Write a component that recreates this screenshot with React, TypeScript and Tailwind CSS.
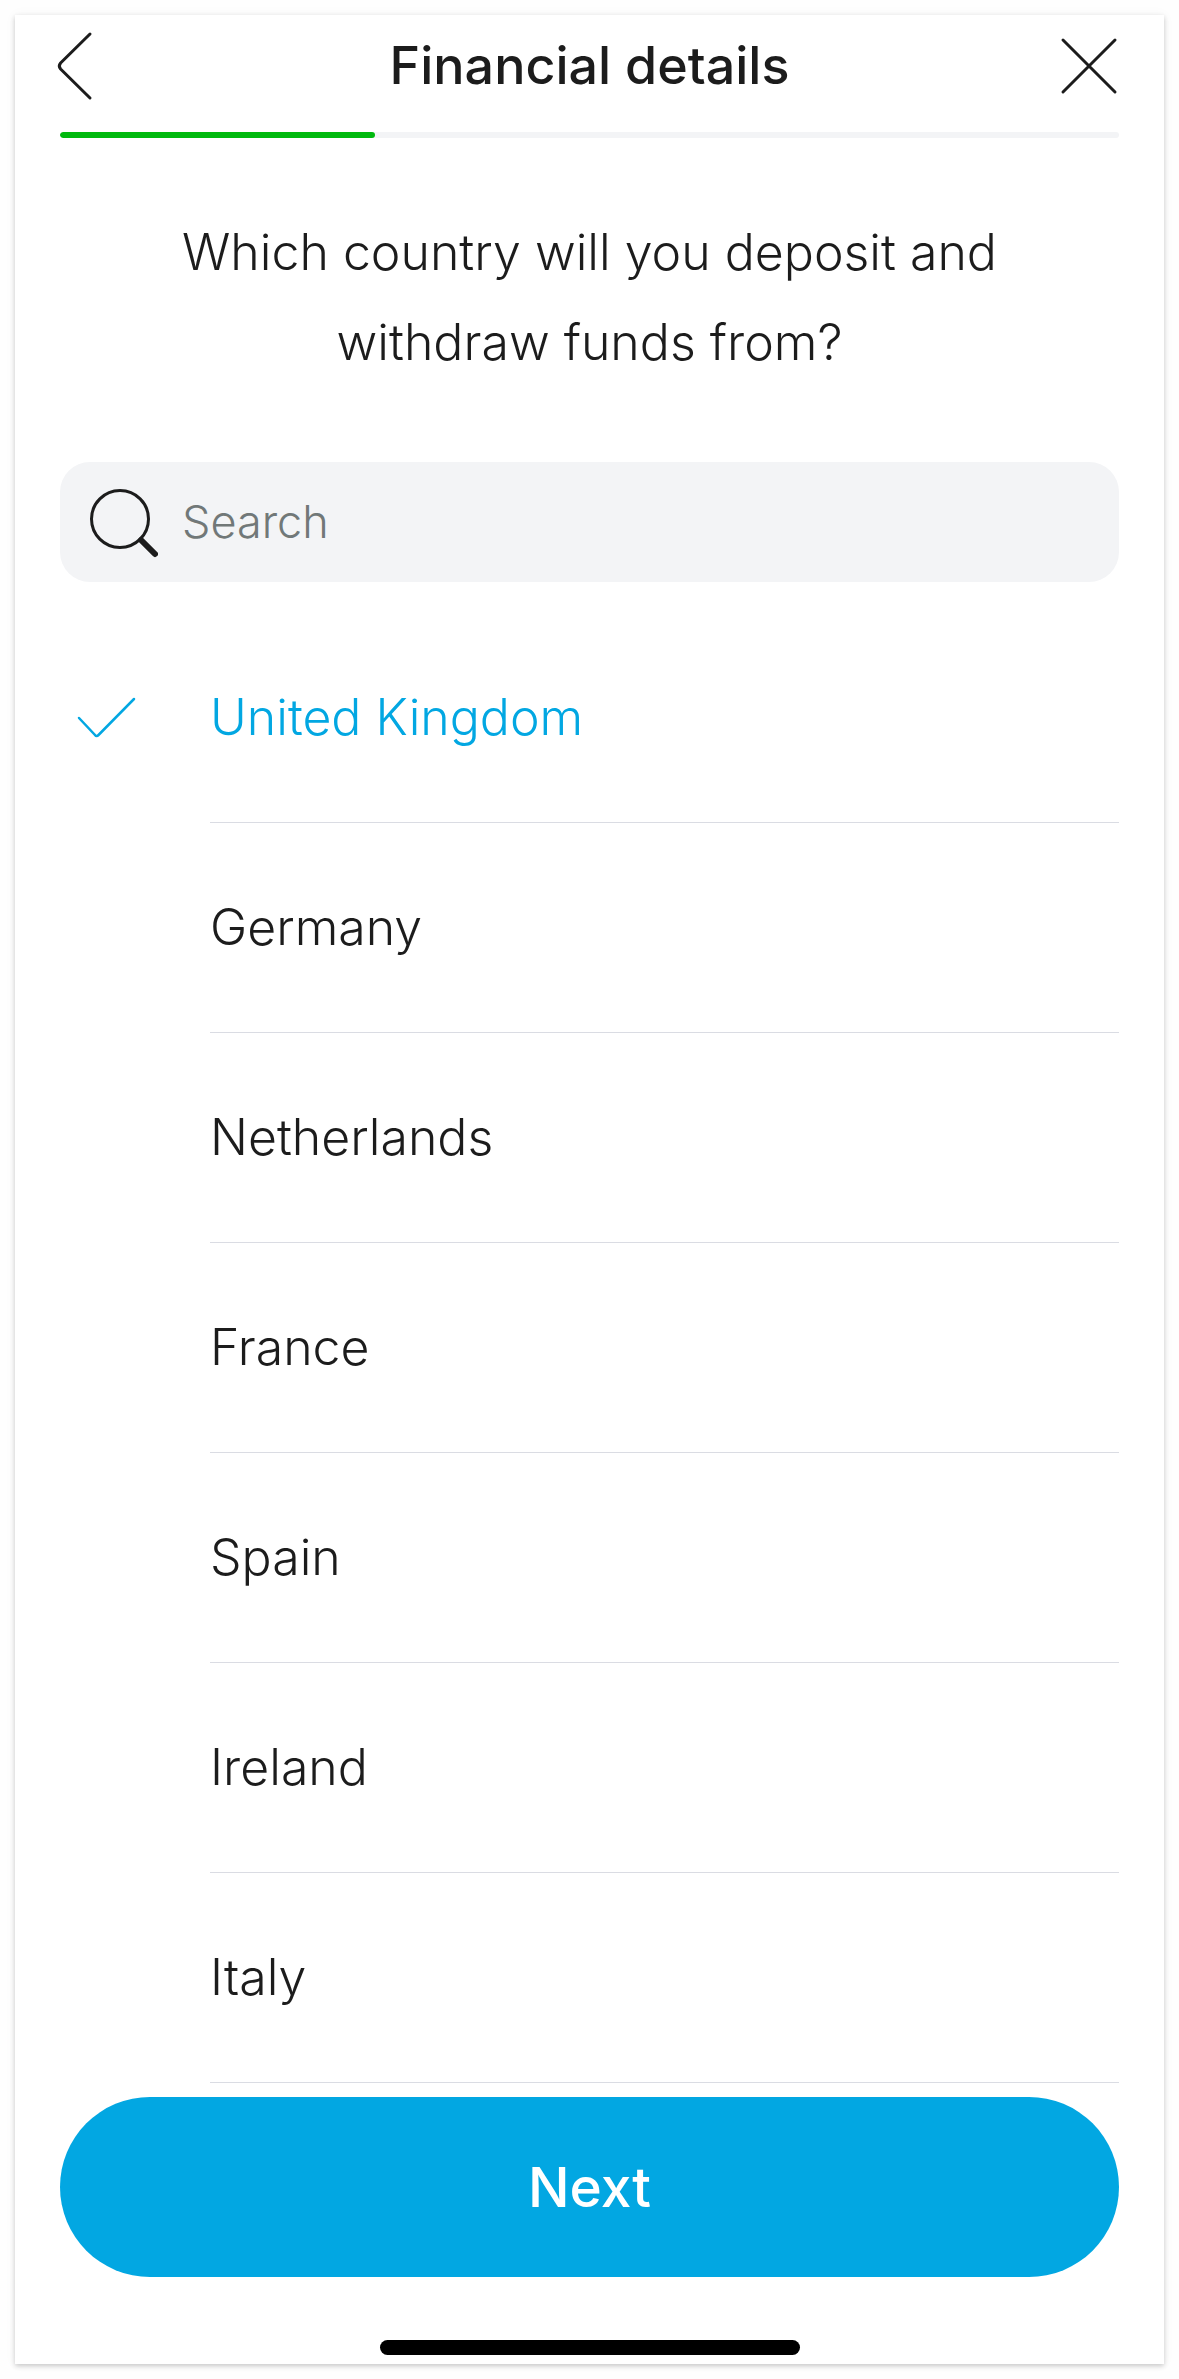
import { useState } from "react";

const COUNTRIES = ["United Kingdom", "Germany", "Netherlands", "France", "Spain", "Ireland", "Italy"];

function BackIcon() {
  return (
    <svg width="72" height="72" viewBox="0 0 72 72" fill="none" stroke="currentColor" strokeWidth="3" strokeLinecap="round" aria-hidden="true">
      <path d="M35 4 L5.6 33 Q3 36 5.6 39 L35 68" />
    </svg>
  );
}

function CloseIcon() {
  return (
    <svg width="72" height="72" viewBox="0 0 72 72" fill="none" stroke="currentColor" strokeWidth="3" strokeLinecap="round" aria-hidden="true">
      <path d="M11 10 L63 62 M63 10 L11 62" />
    </svg>
  );
}

function SearchIcon() {
  return (
    <svg className="shrink-0" width="72" height="72" viewBox="0 0 72 72" fill="none" stroke="currentColor" strokeLinecap="round" aria-hidden="true">
      <circle cx="34" cy="33" r="28.5" strokeWidth="3" />
      <path d="M55 54 L69 68" strokeWidth="6" />
    </svg>
  );
}

function CheckIcon() {
  return (
    <svg width="60" height="60" viewBox="0 0 60 60" fill="none" stroke="currentColor" strokeWidth="2.5" strokeLinecap="round" aria-hidden="true">
      <path d="M3 31 L19 48 Q20.5 50 22.5 48 L58 12" />
    </svg>
  );
}

export default function App() {
  const [query, setQuery] = useState("");
  const [country, setCountry] = useState("United Kingdom");

  const shown = COUNTRIES.filter((c) => c.toLowerCase().includes(query.toLowerCase()));

  return (
    <div className="min-h-screen bg-[#fefefe] p-[15px] font-['Inter',sans-serif] text-[#1c1c1c]">
      <main className="bg-white pb-[9px] shadow-[0_2px_5px_rgba(0,0,0,0.2),0_0_12px_rgba(0,0,0,0.04)]">
        <header className="flex h-[102px] items-center justify-between px-10">
          <button type="button" aria-label="Back"><BackIcon /></button>
          <h1 className="text-[52px] leading-[60px] font-medium">Financial details</h1>
          <button type="button" aria-label="Close"><CloseIcon /></button>
        </header>

        <div className="px-[45px]">
          <div className="mt-[15px] h-[6px] overflow-hidden rounded-full bg-[#f3f4f6]">
            <div className="h-full rounded-full bg-[#00b90e]" style={{ width: "29.75%" }} />
          </div>

          <h2 className="mx-auto mt-[69px] max-w-[960px] text-center text-[50px] leading-[90px] font-light">
            Which country will you deposit and <br />withdraw funds from?
          </h2>

          <label className="mt-[75px] flex h-[120px] items-center gap-6 rounded-[30px] bg-[#f3f4f6] px-[26px]">
            <SearchIcon />
            <input
              type="text"
              aria-label="Search"
              placeholder="Search"
              value={query}
              onChange={(e) => setQuery(e.target.value)}
              className="min-w-0 flex-1 bg-transparent text-[45px] leading-[60px] font-light outline-none placeholder:text-[#717878]"
            />
          </label>

          <fieldset aria-label="Country" className="mt-[31px]">
            {shown.map((c) => (
              <label key={c} className={c === country ? "relative flex text-[#02a7e2]" : "relative flex"}>
                <input
                  type="radio"
                  name="country"
                  value={c}
                  checked={c === country}
                  onChange={() => setCountry(c)}
                  className="sr-only"
                />
                <span className="flex w-[150px] items-center pb-0.5 pl-4">{c === country && <CheckIcon />}</span>
                <span className="flex h-[210px] flex-1 items-center border-b border-[#dadce3] pb-0.5 text-[50px] leading-[60px] font-light">
                  {c}
                </span>
              </label>
            ))}
          </fieldset>

          <button type="button" className="mt-[14px] h-[180px] w-full rounded-full bg-[#02a7e2] text-[55px] leading-[60px] font-medium text-white">
            Next
          </button>
        </div>

        <div className="mx-auto mt-[63px] h-[15px] w-[420px] rounded-full bg-black" />
      </main>
    </div>
  );
}
